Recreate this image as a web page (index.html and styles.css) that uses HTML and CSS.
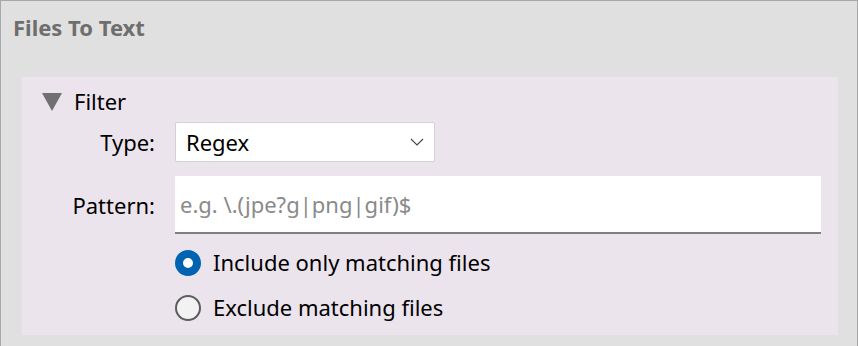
FILE: index.html
```html
<!DOCTYPE html>
<html>
<head>
    <title>Files To Text</title>
    <link rel="stylesheet" href="styles.css">
</head>
<body>
    <div class="window">
        <div class="title">Files To Text</div>
        <div class="panel">
            <div class="expander">
                <span class="arrow"></span>
                <span>Filter</span>
            </div>
            <div class="form">
                <label class="label">Type:</label>
                <div class="select">
                    <span>Regex</span>
                    <svg class="chevron" width="14" height="8" viewBox="0 0 14 8">
                        <path d="M1 1 L7 7 L13 1" fill="none" stroke="#444" stroke-width="1.1"/>
                    </svg>
                </div>
                <label class="label label-pattern">Pattern:</label>
                <input class="text-input" type="text" placeholder="e.g. \.(jpe?g|png|gif)$">
                <div class="radio-row radio-first">
                    <span class="radio checked"></span>
                    <span>Include only matching files</span>
                </div>
                <div class="radio-row">
                    <span class="radio"></span>
                    <span>Exclude matching files</span>
                </div>
            </div>
        </div>
    </div>
</body>
</html>
```

FILE: styles.css
```css
body {
    margin: 0;
    font-family: "Noto Sans", "Open Sans", sans-serif;
    font-size: 22px;
    line-height: 1.2;
    color: #000;
}
.window {
    width: 858px;
    height: 346px;
    box-sizing: border-box;
    border: 1px solid #a8a8a8;
    border-bottom: none;
    background: #e0e0e0;
    display: flex;
    flex-direction: column;
}
.title {
    height: 76px;
    padding: 13px 0 0 12px;
    box-sizing: border-box;
    font-weight: bold;
    font-size: 22px;
    color: #6e6e6e;
}
.panel {
    margin: 0 19px 0 21px;
    height: 258px;
    box-sizing: border-box;
    background: #ece4ec;
    padding: 11px 17px 0 20px;
}
.expander {
    height: 27px;
    display: flex;
    align-items: center;
    gap: 12px;
}
.arrow {
    width: 0;
    height: 0;
    border-left: 10px solid transparent;
    border-right: 10px solid transparent;
    border-top: 18px solid #707070;
}
.form {
    margin-top: 7px;
    display: grid;
    grid-template-columns: 113px 1fr;
    column-gap: 20px;
}
.label {
    text-align: right;
    align-self: center;
}
.label-pattern {
    margin-top: 14px;
}
.select {
    width: 260px;
    height: 40px;
    box-sizing: border-box;
    background: #fff;
    border: 1px solid #d2d2d2;
    border-radius: 2px;
    display: flex;
    align-items: center;
    justify-content: space-between;
    padding: 0 10px 0 10px;
}
.chevron {
    display: block;
}
.text-input {
    margin-top: 14px;
    height: 58px;
    box-sizing: border-box;
    border: none;
    border-bottom: 2px solid #808080;
    background: #fff;
    padding: 0 5px;
    font-family: inherit;
    font-size: 22px;
    outline: none;
}
.text-input::placeholder {
    color: #8a8a8a;
}
.radio-row {
    grid-column: 2;
    height: 45px;
    display: flex;
    align-items: center;
    gap: 12px;
}
.radio-first {
    margin-top: 6px;
}
.radio {
    width: 26px;
    height: 26px;
    box-sizing: border-box;
    border-radius: 50%;
    border: 2px solid #5c5c5c;
    background: #f2f2f2;
}
.radio.checked {
    border: 8px solid #0063b1;
    background: #fff;
}
```
